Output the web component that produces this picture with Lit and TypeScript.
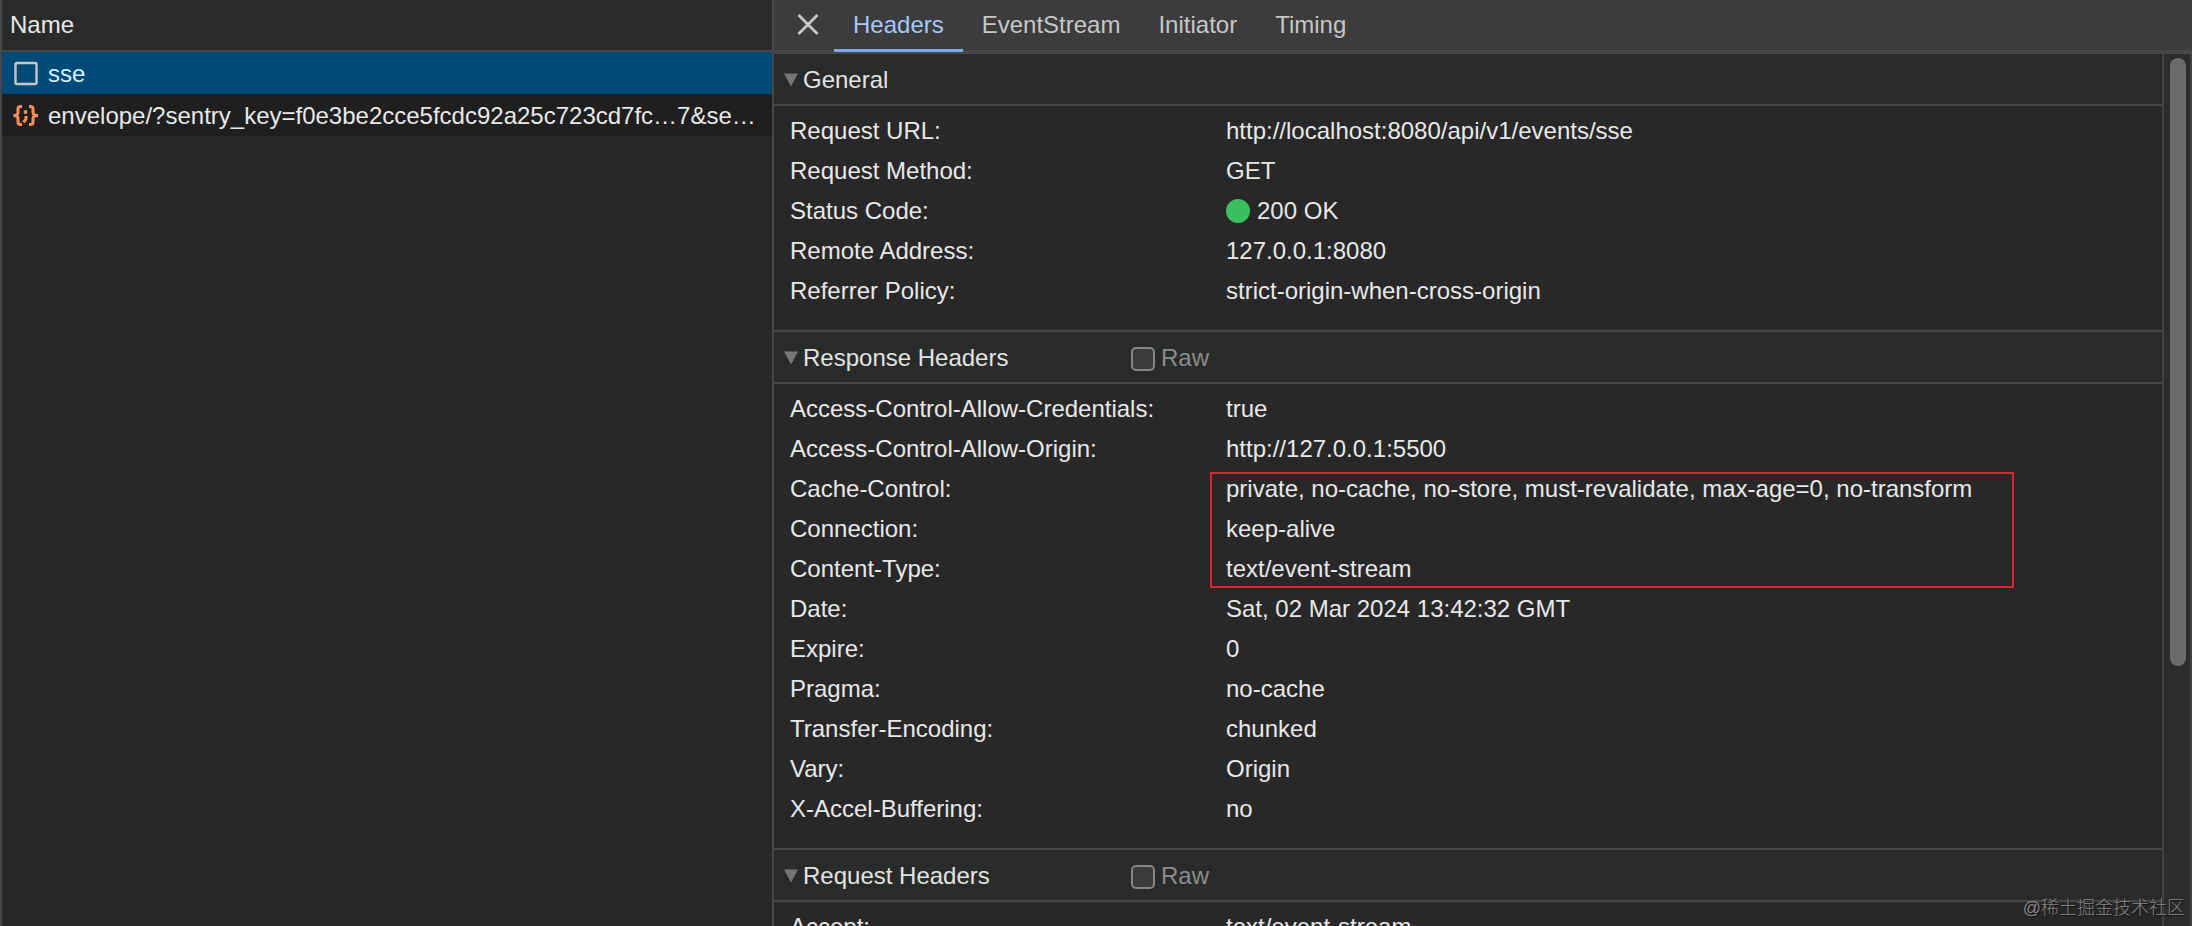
import { LitElement, html, css, nothing } from "lit";
import { customElement, property, state } from "lit/decorators.js";

interface HeaderEntry {
  name: string;
  value: string;
  ok?: boolean;
}

const GENERAL: HeaderEntry[] = [
  { name: "Request URL:", value: "http://localhost:8080/api/v1/events/sse" },
  { name: "Request Method:", value: "GET" },
  { name: "Status Code:", value: "200 OK", ok: true },
  { name: "Remote Address:", value: "127.0.0.1:8080" },
  { name: "Referrer Policy:", value: "strict-origin-when-cross-origin" },
];

const RESPONSE_TOP: HeaderEntry[] = [
  { name: "Access-Control-Allow-Credentials:", value: "true" },
  { name: "Access-Control-Allow-Origin:", value: "http://127.0.0.1:5500" },
];

const RESPONSE_MARKED: HeaderEntry[] = [
  {
    name: "Cache-Control:",
    value: "private, no-cache, no-store, must-revalidate, max-age=0, no-transform",
  },
  { name: "Connection:", value: "keep-alive" },
  { name: "Content-Type:", value: "text/event-stream" },
];

const RESPONSE_REST: HeaderEntry[] = [
  { name: "Date:", value: "Sat, 02 Mar 2024 13:42:32 GMT" },
  { name: "Expire:", value: "0" },
  { name: "Pragma:", value: "no-cache" },
  { name: "Transfer-Encoding:", value: "chunked" },
  { name: "Vary:", value: "Origin" },
  { name: "X-Accel-Buffering:", value: "no" },
];

const REQUEST: HeaderEntry[] = [{ name: "Accept:", value: "text/event-stream" }];

@customElement("header-section")
class HeaderSection extends LitElement {
  @property() heading = "";
  @property({ type: Boolean }) raw = false;
  @state() private open = true;

  static styles = css`
    :host {
      display: block;
    }
    .bar {
      display: grid;
      grid-template-columns: 357px 1fr;
      align-items: center;
      height: 48px;
      padding-top: 2px;
      background: #292b2a;
      border-bottom: 2px solid #474747;
    }
    .toggle {
      display: flex;
      align-items: center;
      gap: 5px;
      padding: 0 0 0 10px;
      border: 0;
      background: none;
      color: #e3e3e3;
      font: inherit;
      text-align: left;
    }
    .arrow {
      width: 14px;
      height: 14px;
      fill: #757575;
    }
    .raw {
      display: flex;
      align-items: center;
      gap: 6px;
      color: #8c8c8c;
    }
    .raw input {
      appearance: none;
      width: 24px;
      height: 24px;
      margin: 2px 0 0;
      border: 2px solid #858585;
      border-radius: 5px;
      background: #3b3b3b;
    }
    .body {
      padding: 5px 0 19px;
      border-bottom: 2px solid #474747;
    }
  `;

  render() {
    return html`
      <div class="bar">
        <button class="toggle" @click=${() => (this.open = !this.open)}>
          <svg class="arrow" viewBox="0 0 14 14"><path d="M0 0.5H14L7 13.5Z" /></svg>
          <span>${this.heading}</span>
        </button>
        ${this.raw
          ? html`<label class="raw"><input type="checkbox" /><span>Raw</span></label>`
          : nothing}
      </div>
      ${this.open ? html`<div class="body"><slot></slot></div>` : nothing}
    `;
  }
}

@customElement("app-root")
class AppRoot extends LitElement {
  static styles = css`
    :host {
      display: grid;
      grid-template-columns: 774px minmax(0, 1fr);
      box-sizing: border-box;
      height: 100vh;
      overflow: hidden;
      position: relative;
      background: #282828;
      color: #e8e8e8;
      font-family: "Liberation Sans", Arial, sans-serif;
      font-size: 24px;
      line-height: 28px;
    }
    .requests {
      border: solid #474747;
      border-width: 0 2px;
    }
    .column {
      height: 50px;
      display: flex;
      align-items: center;
      padding-left: 8px;
      background: #292b2a;
      border-bottom: 2px solid #474747;
    }
    .request {
      display: flex;
      align-items: center;
      gap: 8px;
      height: 40px;
      padding: 2px 0 0 10px;
      background: #1f1f1f;
      color: inherit;
      text-decoration: none;
      white-space: nowrap;
      overflow: hidden;
    }
    .request.selected {
      background: #004a77;
      color: #d9f0ff;
    }
    .request svg {
      flex: none;
      width: 28px;
      height: 28px;
    }
    .details {
      display: flex;
      flex-direction: column;
      min-width: 0;
      min-height: 0;
    }
    .tabs {
      display: flex;
      flex: none;
      height: 50px;
      background: #3c3c3c;
      border-bottom: 4px solid #474747;
    }
    .close,
    .tab {
      padding: 0;
      border: 0;
      background: none;
      color: #c7c7c7;
      font: inherit;
    }
    .close {
      display: flex;
      align-items: center;
      padding: 0 15px 2px 22px;
    }
    .close svg {
      width: 23px;
      height: 23px;
    }
    .tab {
      height: 52px;
      padding: 0 19px;
      border: solid transparent;
      border-width: 1px 0 3px;
    }
    .tab.active {
      color: #a8c7fa;
      border-bottom-color: #7cacf8;
    }
    .view {
      display: flex;
      flex: 1;
      min-height: 0;
    }
    .sections {
      flex: 1;
      min-width: 0;
      overflow: hidden;
    }
    .track {
      flex: none;
      width: 16px;
      padding: 4px 4px 0 6px;
      background: #2c2c2c;
      border: solid #424242;
      border-width: 0 2px;
    }
    .thumb {
      height: 70%;
      border-radius: 8px;
      background: #6b6b6b;
    }
    dl,
    dd {
      margin: 0;
    }
    .entry {
      display: grid;
      grid-template-columns: 436px 1fr;
      align-items: center;
      height: 40px;
      padding-left: 16px;
      white-space: nowrap;
    }
    .entry dd {
      display: flex;
      align-items: center;
      gap: 7px;
    }
    .dot {
      width: 24px;
      height: 24px;
      border-radius: 50%;
      background: #3bbf5f;
    }
    .marked {
      position: relative;
    }
    .frame {
      position: absolute;
      top: 3px;
      bottom: 1px;
      left: 436px;
      width: 800px;
      border: 2px solid #d9262b;
      pointer-events: none;
    }
    .watermark {
      position: absolute;
      right: 7px;
      bottom: 4px;
      color: #858585;
      font-family: "Liberation Sans", "Noto Sans CJK SC", sans-serif;
      font-size: 18px;
      font-weight: 300;
      text-shadow: 1px 1px 1px #111;
    }
  `;

  @state() private active = "Headers";

  private entries(list: HeaderEntry[]) {
    return list.map(
      (e) => html`<div class="entry">
        <dt>${e.name}</dt>
        <dd>${e.ok ? html`<span class="dot"></span>` : nothing}<span>${e.value}</span></dd>
      </div>`
    );
  }

  render() {
    return html`
      <nav class="requests">
        <div class="column">Name</div>
        <a class="request selected" href="#sse">
          <svg viewBox="0 0 28 28" fill="none" stroke="#c7c7c7" stroke-width="2.4">
            <rect x="3.500" y="3" width="21" height="21" rx="1.500" />
          </svg>
          <span>sse</span>
        </a>
        <a class="request" href="#envelope">
          <svg viewBox="0 0 28 28" fill="none" stroke="#fe8d59" stroke-width="3">
            <path d="M10 4.500H8.500Q6 4.500 6 7V10.500Q6 13.500 1.500 13.500Q6 13.500 6 16.500V20Q6 22.500 8.500 22.500H10M17 4.500H18.500Q21 4.500 21 7V10.500Q21 13.500 26 13.500Q21 13.500 21 16.500V20Q21 22.500 18.500 22.500H17" />
            <path d="M14 14V17L11.500 20.500" />
            <circle cx="13.500" cy="10" r="1.900" fill="#fe8d59" stroke="none" />
          </svg>
          <span>envelope/?sentry_key=f0e3be2cce5fcdc92a25c723cd7fc…7&amp;se…</span>
        </a>
      </nav>
      <main class="details">
        <div class="tabs">
          <button class="close" aria-label="Close">
            <svg viewBox="0 0 23 23" stroke="#c7c7c7" stroke-width="2.800">
              <path d="M2.500 2L21.500 21M21.500 2L2.500 21" />
            </svg>
          </button>
          ${["Headers", "EventStream", "Initiator", "Timing"].map(
            (t) => html`<button
              class="tab ${t === this.active ? "active" : ""}"
              @click=${() => (this.active = t)}
            >${t}</button>`
          )}
        </div>
        <div class="view">
          <div class="sections">
            <header-section heading="General">
              <dl>${this.entries(GENERAL)}</dl>
            </header-section>
            <header-section heading="Response Headers" raw>
              <dl>
                ${this.entries(RESPONSE_TOP)}
                <div class="marked">
                  ${this.entries(RESPONSE_MARKED)}
                  <span class="frame"></span>
                </div>
                ${this.entries(RESPONSE_REST)}
              </dl>
            </header-section>
            <header-section heading="Request Headers" raw>
              <dl>${this.entries(REQUEST)}</dl>
            </header-section>
          </div>
          <div class="track"><div class="thumb"></div></div>
        </div>
      </main>
      <span class="watermark">@稀土掘金技术社区</span>
    `;
  }
}
